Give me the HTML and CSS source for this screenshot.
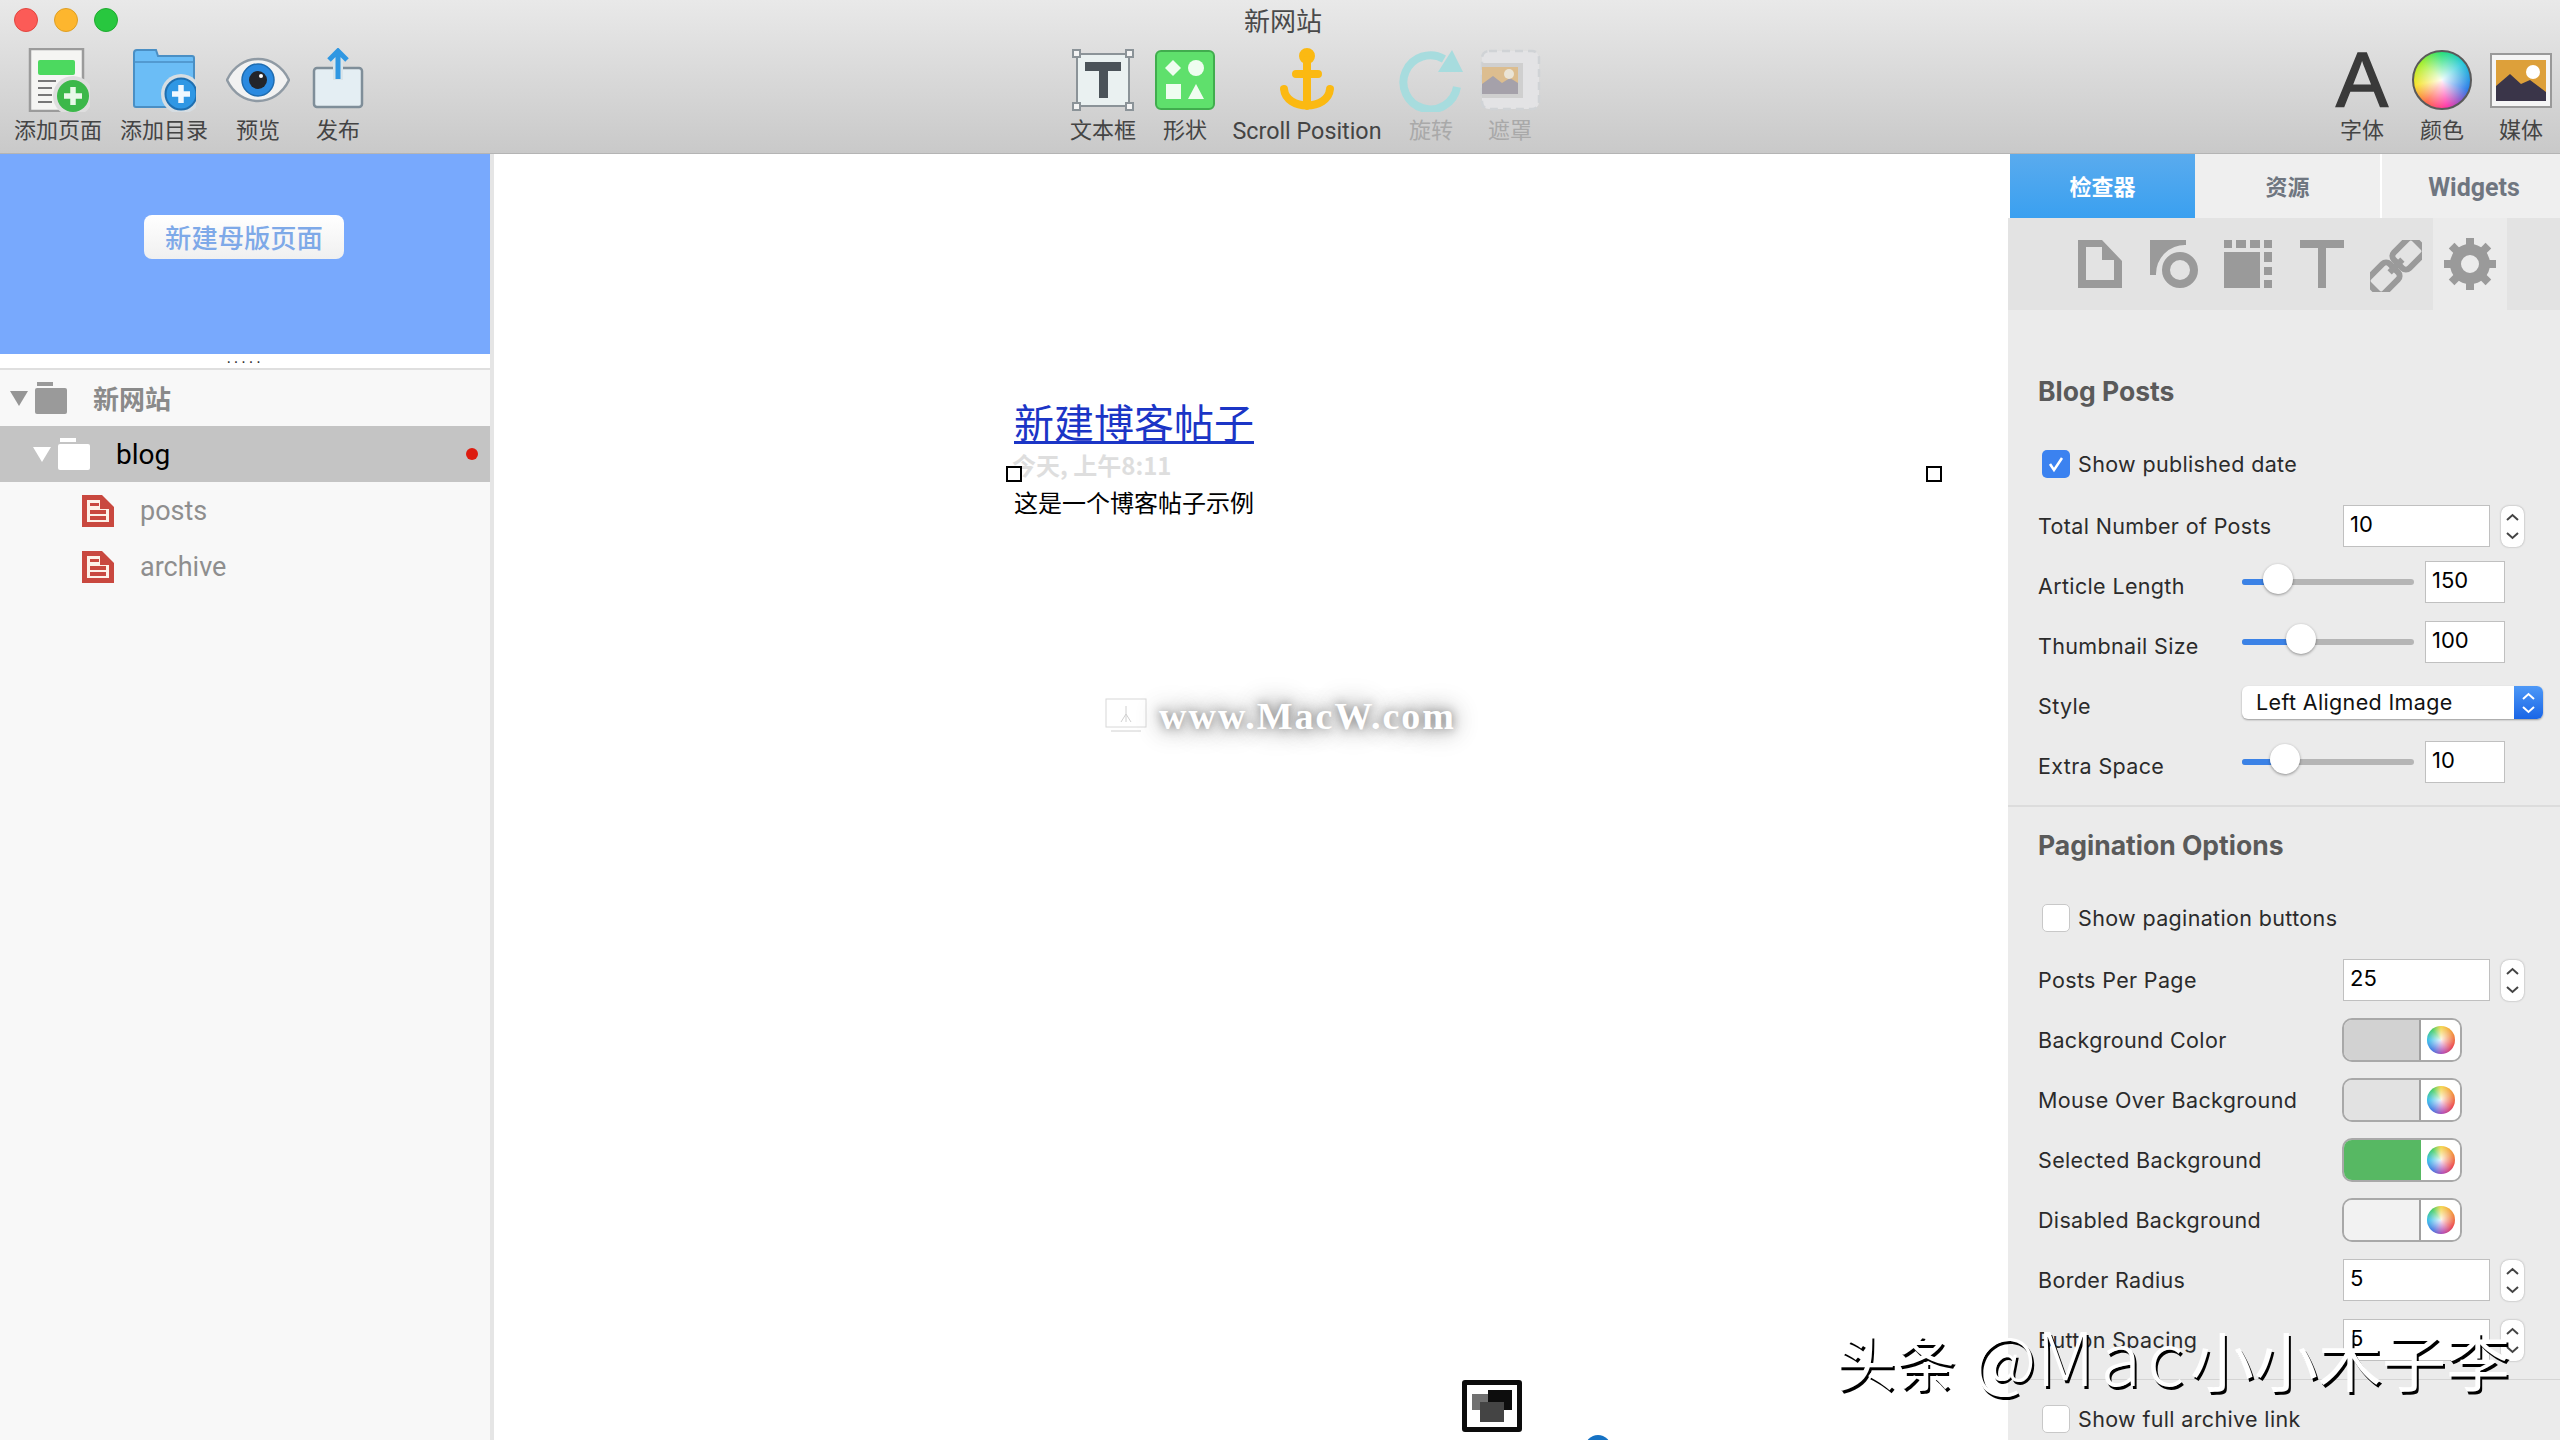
FILE: index.html
```html
<!DOCTYPE html>
<html lang="en">
<head>
    <meta charset="UTF-8">
    <title>新网站</title>
    <link rel="stylesheet" href="styles.css">
</head>
<body>
<div class="toolbar">
    <div class="titlebar">
        <div class="lights"><span class="light red"></span><span class="light yellow"></span><span class="light green"></span></div>
        <div class="title">新网站</div>
        <div></div>
    </div>
    <div class="tools">
        <div class="group">
            <div class="tool w116">
                <svg class="ico" viewBox="0 0 64 64"><rect x="4" y="1" width="53" height="62" fill="#f5f5f3" stroke="#9b9b9b" stroke-width="2.5"/><rect x="12" y="12" width="37" height="15" rx="2" fill="#4cd95f"/><path d="M12 33h18M12 40h14M12 47h14M12 54h14" stroke="#777" stroke-width="2"/><circle cx="47" cy="48" r="20" fill="#dedede"/><circle cx="47" cy="48" r="16" fill="#3cb84a"/><path d="M47 39v18M38 48h18" stroke="#e8f8e8" stroke-width="5.5"/></svg>
                <div class="tool-label">添加页面</div>
            </div>
            <div class="tool w96">
                <svg class="ico" viewBox="0 0 64 64"><path d="M2 5a3 3 0 0 1 3-3h19l2 6h34a2 2 0 0 1 2 2v47a2 2 0 0 1-2 2H4a2 2 0 0 1-2-2z" fill="#6bbdf6" stroke="#4a8fc4" stroke-width="2"/><path d="M3 14h58" stroke="#4a8fc4" stroke-width="1.5"/><circle cx="49" cy="46" r="20" fill="#d6dde2"/><circle cx="49" cy="46" r="15.5" fill="#2f97e4" stroke="#1f6fb0" stroke-width="2"/><path d="M49 37v18M40 46h18" stroke="#f0f8ff" stroke-width="5.5"/></svg>
                <div class="tool-label">添加目录</div>
            </div>
            <div class="tool w92">
                <svg class="ico" viewBox="0 0 64 64"><path d="M1 32C14 4 50 4 63 32C50 60 14 60 1 32Z" fill="#f2f2f2" stroke="#8f9aa4" stroke-width="2.5"/><circle cx="32" cy="32" r="16" fill="#2b8ae0" stroke="#1f6cb0" stroke-width="1.5"/><circle cx="32" cy="32" r="9" fill="#23252a"/><circle cx="35" cy="28" r="2" fill="#fff"/></svg>
                <div class="tool-label">预览</div>
            </div>
            <div class="tool w68">
                <svg class="ico" viewBox="0 0 64 64"><rect x="8" y="20" width="48" height="39" rx="3" fill="#e4eef3" stroke="#7f8e99" stroke-width="2.5"/><path d="M32 4v28" stroke="#d8e4ea" stroke-width="10"/><path d="M32 4v27M23 12l9-9 9 9" fill="none" stroke="#2f97e2" stroke-width="5"/></svg>
                <div class="tool-label">发布</div>
            </div>
        </div>
        <div class="group mid">
            <div class="tool w90">
                <svg class="ico" viewBox="0 0 64 64"><rect x="6" y="6" width="52" height="52" fill="#eaf1f1" stroke="#8b9398" stroke-width="2"/><g fill="#f4f4f4" stroke="#8b9398" stroke-width="2"><rect x="2" y="2" width="7" height="7"/><rect x="55" y="2" width="7" height="7"/><rect x="2" y="55" width="7" height="7"/><rect x="55" y="55" width="7" height="7"/></g><path d="M14 14h36v9H37v27h-9V23H14z" fill="#4b5359"/></svg>
                <div class="tool-label">文本框</div>
            </div>
            <div class="tool w74">
                <svg class="ico" viewBox="0 0 64 64"><rect x="3" y="3" width="58" height="58" rx="5" fill="#5fe06c" stroke="#41ad4e" stroke-width="2"/><g fill="#effdf0"><path d="M20 12l8 8-8 8-8-8z"/><circle cx="43" cy="20" r="8"/><rect x="13" y="36" width="15" height="15"/><path d="M43 36l8 15H35z"/></g></svg>
                <div class="tool-label">形状</div>
            </div>
            <div class="tool w170">
                <svg class="ico" viewBox="0 0 64 64"><g fill="none" stroke="#fbb912" stroke-width="8"><circle cx="32" cy="8" r="4"/><path d="M32 12v46M21 26h22M9 41c2 22 44 22 46 0" stroke-linecap="round"/></g></svg>
                <div class="tool-label latin">Scroll Position</div>
            </div>
            <div class="tool w78">
                <svg class="ico" viewBox="0 0 64 64"><path d="M45 11A27 27 0 1 0 58 39" fill="none" stroke="#a7dcde" stroke-width="8"/><path d="M53 2l11 22H39z" fill="#a7dcde"/></svg>
                <div class="tool-label faded">旋转</div>
            </div>
            <div class="tool w80">
                <svg class="ico" viewBox="0 0 64 64"><rect x="4" y="3" width="57" height="58" rx="7" fill="#e3e3e5" stroke="#d0d3d6" stroke-width="2.5" stroke-dasharray="8 5"/><rect x="4" y="15" width="41" height="35" fill="#cfcfcf"/><rect x="4" y="19" width="36" height="27" fill="#dcbd8f"/><path d="M4 36l11-8 9 7 8-5 8 5v11H4z" fill="#a5a1aa"/><circle cx="31" cy="26" r="5" fill="#eae4d6"/></svg>
                <div class="tool-label faded">遮罩</div>
            </div>
        </div>
        <div class="group right">
            <div class="tool w80">
                <div class="ico-slot font-glyph">A</div>
                <div class="tool-label">字体</div>
            </div>
            <div class="tool w80">
                <div class="ico-slot"><div class="wheel big"></div></div>
                <div class="tool-label">颜色</div>
            </div>
            <div class="tool w78">
                <svg class="ico" viewBox="0 0 64 64"><rect x="2" y="6" width="60" height="53" fill="#f5f5f5" stroke="#999" stroke-width="2"/><rect x="7" y="12" width="50" height="41" fill="#dda03a"/><path d="M7 38l14-12 11 10 9-4 16 12v9H7z" fill="#3a3549"/><circle cx="44" cy="24" r="7" fill="#fff"/></svg>
                <div class="tool-label">媒体</div>
            </div>
        </div>
    </div>
</div>

<div class="main">
    <div class="sidebar">
        <div class="master">
            <div class="master-btn">新建母版页面</div>
        </div>
        <div class="grip">.....</div>
        <div class="tree">
            <div class="tree-row">
                <span class="tri"></span>
                <svg class="folder" viewBox="0 0 32 32"><rect x="2" width="16" height="4" fill="#9a9a9a"/><rect y="6" width="32" height="26" rx="2" fill="#9a9a9a"/></svg>
                <span class="tree-name root">新网站</span>
            </div>
            <div class="tree-row selected">
                <span class="tri"></span>
                <svg class="folder" viewBox="0 0 32 32"><rect x="2" width="16" height="4" fill="#fff"/><rect y="6" width="32" height="26" rx="2" fill="#fff"/></svg>
                <span class="tree-name">blog</span>
                <span class="dot"></span>
            </div>
            <div class="tree-row page">
                <svg class="doc" viewBox="0 0 32 32"><path d="M0 0h20l12 12v20H0z" fill="#c9483f"/><path d="M5 5h13v9h9v13H5z" fill="#fdf1e8"/><path d="M8 8h9v3H8zM8 15h16v4H8zM8 21h16v4H8z" fill="#c9483f"/></svg>
                <span class="tree-name muted">posts</span>
            </div>
            <div class="tree-row page">
                <svg class="doc" viewBox="0 0 32 32"><path d="M0 0h20l12 12v20H0z" fill="#c9483f"/><path d="M5 5h13v9h9v13H5z" fill="#fdf1e8"/><path d="M8 8h9v3H8zM8 15h16v4H8zM8 21h16v4H8z" fill="#c9483f"/></svg>
                <span class="tree-name muted">archive</span>
            </div>
        </div>
    </div>

    <div class="canvas">
        <div class="post">
            <div class="post-title">新建博客帖子</div>
            <div class="post-date">今天, 上午8:11</div>
            <div class="post-body">这是一个博客帖子示例</div>
        </div>
        <span class="handle h-left"></span>
        <span class="handle h-right"></span>
        <div class="site-mark">
            <svg class="site-ico" viewBox="0 0 42 36"><rect x="1" y="1" width="40" height="28" fill="none" stroke="#d8d8d8"/><path d="M21 8v16M16 24l5-8 5 8M6 33h30" fill="none" stroke="#d0d0d0"/></svg>
            <span class="site-text">www.MacW.com</span>
        </div>
        <div class="mini-ico"><span class="sq a"></span><span class="sq b"></span><span class="sq c"></span></div>
        <span class="blue-dot"></span>
    </div>

    <div class="inspector">
        <div class="tabs">
            <div class="tab active">检查器</div>
            <div class="tab">资源</div>
            <div class="tab last">Widgets</div>
        </div>
        <div class="icon-bar">
            <div class="icon-cell"><svg width="44" height="48" viewBox="0 0 44 48"><path fill-rule="evenodd" d="M0 0H24L44 21V48H0ZM8 7V40H36V20H24V7Z" fill="#9a9a9a"/></svg></div>
            <div class="icon-cell"><svg width="48" height="48" viewBox="0 0 48 48"><path d="M0 0H36V5A29 29 0 0 0 6 35H0Z" fill="#9a9a9a"/><circle cx="30" cy="30" r="14" fill="none" stroke="#9a9a9a" stroke-width="8"/></svg></div>
            <div class="icon-cell"><svg width="48" height="48" viewBox="0 0 48 48"><path d="M0 12H36V48H0ZM0 0H8V8H0ZM12 0H22V8H12ZM26 0H36V8H26ZM40 0H48V8H40ZM40 12H48V22H40ZM40 27H48V35H40ZM40 40H48V48H40Z" fill="#9a9a9a"/></svg></div>
            <div class="icon-cell"><svg width="44" height="48" viewBox="0 0 44 48"><path d="M0 0H44V8H26V48H18V8H0Z" fill="#9a9a9a"/></svg></div>
            <div class="icon-cell"><svg width="52" height="52" viewBox="0 0 52 52"><g transform="rotate(-45 26 26)" fill="none" stroke="#9a9a9a" stroke-width="6"><rect x="-6" y="15" width="29" height="22" rx="5"/><rect x="29" y="15" width="29" height="22" rx="5"/><path d="M17 26H35"/></g></svg></div>
            <div class="icon-cell on"><svg width="52" height="52" viewBox="0 0 52 52"><circle cx="26" cy="26" r="14.5" fill="none" stroke="#9a9a9a" stroke-width="11"/><g fill="#9a9a9a"><rect x="22" y="0" width="8" height="8"/><rect x="22" y="44" width="8" height="8"/><rect x="0" y="22" width="8" height="8"/><rect x="44" y="22" width="8" height="8"/><rect x="22" y="0" width="8" height="9" transform="rotate(45 26 26)"/><rect x="22" y="43" width="8" height="9" transform="rotate(45 26 26)"/><rect x="22" y="0" width="8" height="9" transform="rotate(-45 26 26)"/><rect x="22" y="43" width="8" height="9" transform="rotate(-45 26 26)"/></g></svg></div>
        </div>

        <div class="section first">
            <div class="heading">Blog Posts</div>
            <div class="check-row"><span class="check on"><svg width="28" height="28" viewBox="0 0 28 28"><path d="M8 14l4 6 8-12" fill="none" stroke="#fff" stroke-width="2.5"/></svg></span>Show published date</div>
            <div class="row short">
                <div class="label wide">Total Number of Posts</div>
                <div class="field">10</div>
                <div class="stepper"><svg width="23" height="41" viewBox="0 0 23 41"><path d="M6 14l5.500-5 5.500 5M6 27l5.500 5 5.500-5" fill="none" stroke="#444" stroke-width="2"/></svg></div>
            </div>
            <div class="row">
                <div class="label narrow low">Article Length</div>
                <div class="slider"><span class="fill" style="width:36px"></span><span class="knob" style="left:36px"></span></div>
                <div class="field small">150</div>
            </div>
            <div class="row">
                <div class="label narrow low">Thumbnail Size</div>
                <div class="slider"><span class="fill" style="width:59px"></span><span class="knob" style="left:59px"></span></div>
                <div class="field small">100</div>
            </div>
            <div class="row">
                <div class="label narrow low">Style</div>
                <div class="select">
                    <div class="select-text">Left Aligned Image</div>
                    <div class="select-arrow"><svg width="29" height="33" viewBox="0 0 29 33"><path d="M9 13l5.500-5 5.500 5M9 21l5.500 5 5.500-5" fill="none" stroke="#fff" stroke-width="2"/></svg></div>
                </div>
            </div>
            <div class="row">
                <div class="label narrow low">Extra Space</div>
                <div class="slider"><span class="fill" style="width:43px"></span><span class="knob" style="left:43px"></span></div>
                <div class="field small">10</div>
            </div>
        </div>

        <div class="section second">
            <div class="heading">Pagination Options</div>
            <div class="check-row"><span class="check"></span>Show pagination buttons</div>
            <div class="row">
                <div class="label wide">Posts Per Page</div>
                <div class="field">25</div>
                <div class="stepper"><svg width="23" height="41" viewBox="0 0 23 41"><path d="M6 14l5.500-5 5.500 5M6 27l5.500 5 5.500-5" fill="none" stroke="#444" stroke-width="2"/></svg></div>
            </div>
            <div class="row">
                <div class="label wide">Background Color</div>
                <div class="well"><span class="swatch s1"></span><span class="well-right"><span class="wheel"></span></span></div>
            </div>
            <div class="row">
                <div class="label wide">Mouse Over Background</div>
                <div class="well"><span class="swatch s2"></span><span class="well-right"><span class="wheel"></span></span></div>
            </div>
            <div class="row">
                <div class="label wide">Selected Background</div>
                <div class="well"><span class="swatch s3"></span><span class="well-right"><span class="wheel"></span></span></div>
            </div>
            <div class="row">
                <div class="label wide">Disabled Background</div>
                <div class="well"><span class="swatch s4"></span><span class="well-right"><span class="wheel"></span></span></div>
            </div>
            <div class="row">
                <div class="label wide">Border Radius</div>
                <div class="field">5</div>
                <div class="stepper"><svg width="23" height="41" viewBox="0 0 23 41"><path d="M6 14l5.500-5 5.500 5M6 27l5.500 5 5.500-5" fill="none" stroke="#444" stroke-width="2"/></svg></div>
            </div>
            <div class="row">
                <div class="label wide">Button Spacing</div>
                <div class="field">5</div>
                <div class="stepper"><svg width="23" height="41" viewBox="0 0 23 41"><path d="M6 14l5.500-5 5.500 5M6 27l5.500 5 5.500-5" fill="none" stroke="#444" stroke-width="2"/></svg></div>
            </div>
        </div>

        <div class="section third">
            <div class="check-row"><span class="check"></span>Show full archive link</div>
        </div>
    </div>
</div>

<div class="watermark"><span class="wm-head">头条</span> <span class="wm-at">@</span><span class="wm-latin">Mac</span>小小木子李</div>
</body>
</html>
```

FILE: styles.css
```css
html, body { margin: 0; height: 100%; }
body {
    position: relative;
    width: 2560px;
    height: 1440px;
    overflow: hidden;
    display: flex;
    flex-direction: column;
    background: #fff;
    font-family: "Inter", "Noto Sans CJK SC", sans-serif;
    color: #333;
}

/* toolbar */
.toolbar {
    height: 153px;
    flex: none;
    background: linear-gradient(#e9e9e9, #c9c9c9);
    border-bottom: 1px solid #b4b4b4;
}
.titlebar {
    height: 40px;
    display: grid;
    grid-template-columns: 1fr auto 1fr;
    align-items: center;
}
.lights { display: flex; gap: 16px; padding-left: 14px; }
.light { width: 24px; height: 24px; border-radius: 50%; box-sizing: border-box; }
.light.red { background: #fc5b57; border: 1px solid #e2463f; }
.light.yellow { background: #fdb62e; border: 1px solid #de9f24; }
.light.green { background: #28c73f; border: 1px solid #1fab2f; }
.title {
    font-size: 26px;
    line-height: 40px;
    color: #4a4a4a;
    padding-left: 6px;
    font-family: "Noto Sans CJK SC", sans-serif;
}
.tools { display: flex; padding-top: 8px; }
.group { display: flex; }
.group.mid { margin-left: 686px; }
.group.right { margin-left: auto; }
.tool { display: flex; flex-direction: column; align-items: center; }
.w116 { width: 116px; }
.w96 { width: 96px; }
.w92 { width: 92px; }
.w68 { width: 68px; }
.w90 { width: 90px; }
.w74 { width: 74px; }
.w170 { width: 170px; }
.w78 { width: 78px; }
.w80 { width: 80px; }
.ico { width: 64px; height: 64px; display: block; }
.ico-slot { width: 64px; height: 64px; display: flex; align-items: center; justify-content: center; }
.tool-label {
    margin-top: 5px;
    font-size: 22px;
    line-height: 28px;
    color: #444;
    white-space: nowrap;
    font-family: "Roboto", "Noto Sans CJK SC", sans-serif;
}
.tool-label.latin { font-size: 23.300px; }
.tool-label.faded { color: #a9a9a9; }
.font-glyph {
    font-family: "Liberation Sans", sans-serif;
    font-size: 78px;
    line-height: 64px;
    color: #3a3a3a;
    -webkit-text-stroke: 1.5px #3a3a3a;
}

.wheel {
    display: block;
    width: 28px;
    height: 28px;
    border-radius: 50%;
    background:
        radial-gradient(circle, rgba(255,255,255,0.9) 0, rgba(255,255,255,0) 75%),
        conic-gradient(#f3d23c, #f07c2c 70deg, #e9393f 120deg, #b03aa8 170deg, #3a6fe0 220deg, #28b8e8 270deg, #35c95a 320deg, #f3d23c);
}
.wheel.big {
    width: 60px;
    height: 60px;
    box-sizing: border-box;
    border: 2px solid #5a5a5a;
    background:
        radial-gradient(circle, rgba(255,255,255,0.95) 0, rgba(255,255,255,0) 70%),
        conic-gradient(#27e07a, #25c8d8 50deg, #2a7be8 110deg, #ff35a8 170deg, #ff6a4a 215deg, #f5e52a 260deg, #a0ee2a 310deg, #27e07a);
}

.main { flex: 1; display: flex; min-height: 0; }

/* left side */
.sidebar {
    width: 494px;
    box-sizing: border-box;
    flex: none;
    border-right: 4px solid #e5e5e5;
    background: #f8f8f8;
}
.master {
    height: 200px;
    background: #78a9fd;
    display: flex;
    justify-content: center;
    padding-top: 61px;
    box-sizing: border-box;
}
.master-btn {
    width: 200px;
    height: 44px;
    margin-left: -2px;
    border-radius: 8px;
    background: linear-gradient(#fff, #f0f0f0);
    color: #7ea9e8;
    font-size: 26.300px;
    font-weight: 500;
    line-height: 44px;
    text-align: center;
    font-family: "Noto Sans CJK SC", sans-serif;
}
.grip {
    height: 14px;
    background: #fff;
    border-bottom: 2px solid #dfdfdf;
    color: #333;
    font-size: 16px;
    line-height: 8px;
    letter-spacing: 3px;
    text-align: center;
    font-family: "Liberation Sans", sans-serif;
}
.tree-row { height: 56px; display: flex; align-items: center; padding-left: 10px; box-sizing: border-box; }
.tree-row.selected { background: #c4c4c4; padding-left: 33px; }
.tree-row.page { padding-left: 82px; padding-top: 2px; }
.tri {
    width: 0;
    height: 0;
    border-left: 9px solid transparent;
    border-right: 9px solid transparent;
    border-top: 15px solid #969696;
    margin-right: 7px;
}
.selected .tri { border-top-color: #fff; }
.folder, .doc { width: 32px; height: 32px; flex: none; }
.tree-name {
    margin-left: 26px;
    font-size: 28px;
    color: #000;
    font-family: "Roboto", "Noto Sans CJK SC", sans-serif;
}
.tree-name.root { font-size: 26px; color: #8a8a8a; font-weight: 700; margin-top: -2px; }
.tree-name.muted { color: #8e8e8e; font-size: 27px; }
.dot { width: 12px; height: 12px; border-radius: 50%; background: #dd1c10; margin-left: auto; margin-right: 12px; }

/* canvas */
.canvas { width: 1514px; flex: none; position: relative; overflow: hidden; background: #fff; }
.post { padding: 243px 0 0 520px; font-family: "Noto Sans CJK SC", sans-serif; }
.post-title {
    width: 240px;
    font-size: 40px;
    line-height: 48px;
    color: #1b35c6;
    text-decoration: underline;
    text-decoration-thickness: 3px;
    text-underline-offset: 3px;
}
.post-date {
    margin-top: 5px;
    margin-left: -2px;
    font-size: 24px;
    line-height: 30px;
    font-weight: 700;
    color: #dedede;
}
.post-body { margin-top: 7px; font-size: 24px; line-height: 30px; color: #000; }
.handle {
    position: absolute;
    top: 312px;
    width: 16px;
    height: 16px;
    box-sizing: border-box;
    border: 2px solid #000;
    background: #fff;
}
.h-left { left: 512px; }
.h-right { left: 1432px; }
.site-mark { position: absolute; left: 611px; top: 540px; display: flex; align-items: center; gap: 12px; }
.site-ico { width: 42px; height: 36px; }
.site-text {
    font-family: "Liberation Serif", serif;
    font-weight: 700;
    font-size: 38px;
    letter-spacing: 2px;
    color: #fff;
    text-shadow: 0 0 10px #888, 0 0 22px #999, 0 0 30px #bbb;
}
.mini-ico {
    position: absolute;
    left: 968px;
    top: 1226px;
    width: 60px;
    height: 52px;
    box-sizing: border-box;
    border: 5px solid #0c0c0c;
    border-radius: 3px;
    background: #fff;
}
.sq { position: absolute; }
.sq.a { left: 5px; top: 9px; width: 16px; height: 16px; background: #707070; }
.sq.c { left: 13px; top: 17px; width: 24px; height: 20px; background: #444; }
.sq.b { left: 21px; top: 5px; width: 24px; height: 20px; background: #0d0d0d; }
.blue-dot {
    position: absolute;
    left: 1091px;
    top: 1281px;
    width: 26px;
    height: 26px;
    border-radius: 50%;
    background: #1572c4;
}

/* inspector */
.inspector {
    width: 552px;
    flex: none;
    background: #ebebeb;
    font-size: 21.500px;
    letter-spacing: 0.35px;
    color: #2b2b2b;
}
.tabs { height: 64px; display: flex; padding-left: 2px; background: #fff; letter-spacing: 0; }
.tab {
    width: 185px;
    background: #efefef;
    color: #6f7680;
    font-weight: 700;
    font-size: 22px;
    line-height: 68px;
    text-align: center;
    font-family: "Roboto", "Noto Sans CJK SC", sans-serif;
}
.tab.active { background: linear-gradient(#5aabee, #3aa0f0); color: #fff; }
.tab.last { flex: 1; margin-left: 2px; padding-left: 6px; font-size: 25px; }
.icon-bar { height: 92px; display: flex; padding-left: 55px; background: #e3e3e3; }
.icon-cell { width: 74px; padding-top: 22px; box-sizing: border-box; display: flex; justify-content: center; align-items: flex-start; }
.icon-cell.on { background: #ebebeb; padding-top: 20px; }
.section { padding-left: 30px; }
.section.first { padding-top: 60px; height: 497px; box-sizing: border-box; border-bottom: 2px solid #dcdcdc; }
.section.second { padding-top: 17px; height: 573px; box-sizing: border-box; border-bottom: 1px solid #d4d4d4; }
.section.third { padding-top: 11px; }
.heading { height: 42px; line-height: 42px; font-size: 26.500px; letter-spacing: 0; font-weight: 700; color: #5a5a5a; margin-bottom: 24px; }
.check-row { height: 56px; margin-bottom: 4px; display: flex; align-items: center; padding-left: 4px; }
.check {
    width: 28px;
    height: 28px;
    box-sizing: border-box;
    border: 1px solid #c8c8c8;
    border-radius: 5px;
    background: #fff;
    margin-right: 8px;
    flex: none;
}
.check.on { background: #3b82f0; border: 0; }
.row { height: 60px; display: flex; align-items: center; }
.row.short { height: 56px; padding-top: 4px; box-sizing: border-box; }
.label { flex: none; white-space: nowrap; }
.label.wide { width: 305px; }
.label.narrow { width: 204px; }
.label.low { padding-top: 8px; }
.field {
    width: 147px;
    height: 42px;
    box-sizing: border-box;
    border: 1px solid #c0c0c0;
    background: #fff;
    color: #000;
    padding-left: 6px;
    line-height: 36px;
    flex: none;
    font-size: 22px;
    letter-spacing: 0;
}
.field.small { width: 80px; margin-left: 11px; }
.stepper {
    width: 23px;
    height: 41px;
    margin-left: 11px;
    background: #fff;
    border-radius: 8px;
    box-shadow: 0 0 2px #999;
    flex: none;
}
.stepper svg { display: block; }
.slider { position: relative; width: 172px; height: 6px; border-radius: 3px; background: #b5b5b5; flex: none; }
.fill { position: absolute; left: 0; top: 0; height: 6px; border-radius: 3px; background: #3b82e6; }
.knob {
    position: absolute;
    top: -15px;
    width: 30px;
    height: 30px;
    margin-left: -15px;
    border-radius: 50%;
    background: #fff;
    box-shadow: 0 1px 3px rgba(0,0,0,0.4);
}
.select {
    width: 301px;
    height: 33px;
    display: flex;
    border-radius: 6px;
    overflow: hidden;
    background: #fff;
    box-shadow: 0 1px 2px rgba(0,0,0,0.35);
}
.select-text { flex: 1; padding-left: 14px; line-height: 32px; color: #111; }
.select-arrow { width: 29px; background: linear-gradient(#4d98f7, #1a66e6); }
.select-arrow svg { display: block; }
.well {
    width: 120px;
    height: 44px;
    box-sizing: border-box;
    border: 2px solid #a8a8a8;
    border-radius: 10px;
    overflow: hidden;
    display: flex;
    flex: none;
    margin-left: -1px;
}
.swatch { width: 75px; border-right: 2px solid #a0a0a0; flex: none; }
.s1 { background: #d2d2d2; }
.s2 { background: #e2e2e2; }
.s3 { background: #57b863; border-right-color: #57b863; }
.s4 { background: #f2f2f2; }
.well-right { flex: 1; background: #fff; display: flex; align-items: center; justify-content: center; }

.watermark {
    position: absolute;
    left: 1836px;
    top: 1309px;
    font-family: "Noto Sans CJK SC", sans-serif;
    font-weight: 400;
    font-size: 64px;
    line-height: 90px;
    white-space: nowrap;
    color: #fff;
    text-shadow: 2px 3px 0 #000;
}
.wm-head { font-size: 60px; margin-right: 4px; }
.wm-at { font-size: 68px; font-weight: 300; }
.wm-latin { font-size: 74px; font-weight: 300; letter-spacing: 6px; }
```
